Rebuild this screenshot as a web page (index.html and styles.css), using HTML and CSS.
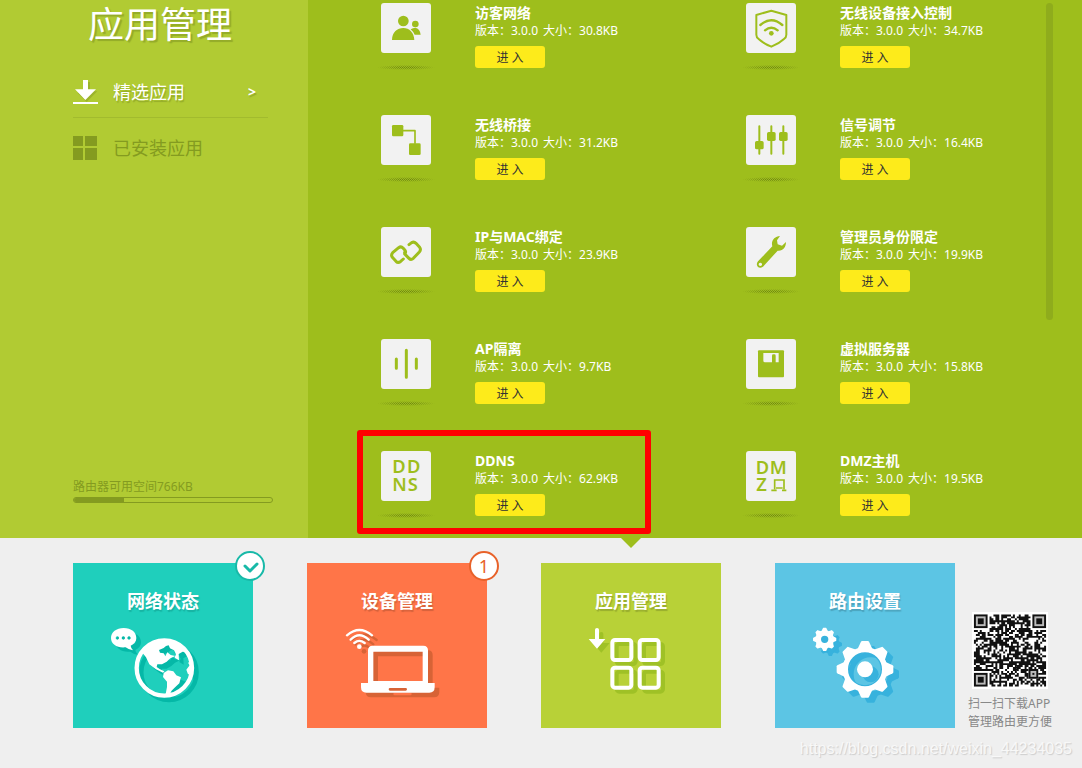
FILE: index.html
```html
<!DOCTYPE html>
<html lang="zh-CN">
<head>
<meta charset="utf-8">
<title>应用管理</title>
<meta name="viewport" content="width=device-width, initial-scale=1">
<link rel="stylesheet" href="styles.css">
</head>
<body>
<div class="top">
  <aside class="sidebar">
    <h1 class="title">应用管理</h1>
    <nav class="nav">
      <a class="nav-item active" href="#featured">
        <svg class="nav-icon" viewBox="219 240 75 75" aria-hidden="true"><path class="icon-shade" d="M255 246h15v28h22l-32 32-28-28h23z"/><path fill="#fff" d="M249 240h15v28h24l-32 32-31-32h24zM219 306h75v6h-75z"/></svg>
        <span>精选应用</span>
        <span class="nav-arrow">&gt;</span>
      </a>
      <a class="nav-item" href="#installed">
        <svg class="nav-icon" viewBox="219 408 75 75" aria-hidden="true"><path fill="currentColor" d="M219 408h30v30h-30zM255 408h36v30h-36zM219 444h30v36h-30zM255 444h36v36h-36z"/></svg>
        <span>已安装应用</span>
      </a>
    </nav>
    <div class="storage">
      <label for="space">路由器可用空间766KB</label>
      <progress id="space" class="space" max="100" value="25"></progress>
    </div>
  </aside>

  <main class="main">
    <ul class="apps">
      <li class="app">
        <div class="art"><svg class="app-icon" viewBox="33 9 150 150" aria-hidden="true"><g class="fill"><circle cx="100" cy="63" r="16"/><path d="M66 120C66 96 82 84 100 84S132 98 133 120z"/><circle cx="136" cy="72" r="10"/><path d="M122 88Q129 83 136 83 150 86 152 104H134Q130 95 122 88z"/></g></svg><span class="shade"></span></div>
        <div class="info"><h2>访客网络</h2><p><span>版本：3.0.0</span><span>大小：30.8KB</span></p><button type="button">进 入</button></div>
      </li>
      <li class="app">
        <div class="art"><svg class="app-icon" viewBox="33 9 150 150" aria-hidden="true"><g class="line" stroke-width="6"><path d="M109 32L154 45V104Q154 112 147 117 132 131 109 140 86 131 71 117 64 112 64 104V45z"/><path stroke-width="7" d="M76 75Q109 46 142 75M90 91Q109 75 128 91"/></g><circle class="fill" cx="109" cy="100" r="7"/></svg><span class="shade"></span></div>
        <div class="info"><h2>无线设备接入控制</h2><p><span>版本：3.0.0</span><span>大小：34.7KB</span></p><button type="button">进 入</button></div>
      </li>
      <li class="app">
        <div class="art"><svg class="app-icon" viewBox="33 345 150 150" aria-hidden="true"><g class="fill"><rect x="66" y="375" width="34" height="34" rx="4"/><rect x="117" y="430" width="35" height="35" rx="4"/></g><path class="line" stroke-width="5" d="M100 392H135V430"/></svg><span class="shade"></span></div>
        <div class="info"><h2>无线桥接</h2><p><span>版本：3.0.0</span><span>大小：31.2KB</span></p><button type="button">进 入</button></div>
      </li>
      <li class="app">
        <div class="art"><svg class="app-icon" viewBox="33 345 150 150" aria-hidden="true"><path class="line" stroke-width="6" d="M73 379V461M109 379V461M145 379V461"/><g class="fill"><rect x="60" y="423" width="26" height="25" rx="5"/><rect x="96" y="396" width="26" height="27" rx="5"/><rect x="132" y="396" width="26" height="27" rx="5"/></g></svg><span class="shade"></span></div>
        <div class="info"><h2>信号调节</h2><p><span>版本：3.0.0</span><span>大小：16.4KB</span></p><button type="button">进 入</button></div>
      </li>
      <li class="app">
        <div class="art"><svg class="app-icon" viewBox="33 21 150 150" aria-hidden="true"><path class="line" stroke-width="9" d="M100 117L91 125Q84 130 78 124L67 112Q62 105 68 98L86 83Q93 78 99 84L105 91Q109 97 104 102M117 74L125 68Q132 64 138 70L149 82Q154 89 148 96L130 115Q123 121 117 115L106 104Q103 100 104 97"/></svg><span class="shade"></span></div>
        <div class="info"><h2>IP与MAC绑定</h2><p><span>版本：3.0.0</span><span>大小：23.9KB</span></p><button type="button">进 入</button></div>
      </li>
      <li class="app">
        <div class="art"><svg class="app-icon" viewBox="33 21 150 150" aria-hidden="true"><path class="fill" fill-rule="evenodd" d="M135 48C119 49 107 62 112 79L69 124C62 132 66 143 76 143 82 143 85 140 88 136L128 92C143 94 153 82 153 66L141 77 128 73 126 61zM76 128a5 5 0 1 0 .1 0z"/></svg><span class="shade"></span></div>
        <div class="info"><h2>管理员身份限定</h2><p><span>版本：3.0.0</span><span>大小：19.9KB</span></p><button type="button">进 入</button></div>
      </li>
      <li class="app">
        <div class="art"><svg class="app-icon" viewBox="33 357 150 150" aria-hidden="true"><path class="line" stroke-width="9" d="M79 417V445M109 391V472M139 417V445"/></svg><span class="shade"></span></div>
        <div class="info"><h2>AP隔离</h2><p><span>版本：3.0.0</span><span>大小：9.7KB</span></p><button type="button">进 入</button></div>
      </li>
      <li class="app">
        <div class="art"><svg class="app-icon" viewBox="33 357 150 150" aria-hidden="true"><rect class="fill" x="69" y="391" width="78" height="81" rx="3"/><path fill="#f2f2f2" d="M85 399H131V427H122V407Q122 403 118 403H115Q111 403 111 407V427H90Q85 427 85 422z"/></svg><span class="shade"></span></div>
        <div class="info"><h2>虚拟服务器</h2><p><span>版本：3.0.0</span><span>大小：15.8KB</span></p><button type="button">进 入</button></div>
      </li>
      <li class="app">
        <div class="art"><svg class="app-icon" viewBox="93 93 150 150" aria-hidden="true"><text class="letters" x="127 171" y="160">DD</text><text class="letters" x="127 173" y="212">NS</text></svg><span class="shade"></span></div>
        <div class="info"><h2>DDNS</h2><p><span>版本：3.0.0</span><span>大小：62.9KB</span></p><button type="button">进 入</button></div>
        <span class="highlight"></span>
      </li>
      <li class="app">
        <div class="art"><svg class="app-icon" viewBox="33 63 150 150" aria-hidden="true"><text class="letters" x="62 104" y="131">DM</text><text class="letters" x="64" y="184">Z</text><path fill="none" stroke="#9ebe1c" stroke-width="5" d="M119 178V150H147V178M109 181H125M141 181H154M123 174H143"/></svg><span class="shade"></span></div>
        <div class="info"><h2>DMZ主机</h2><p><span>版本：3.0.0</span><span>大小：19.5KB</span></p><button type="button">进 入</button></div>
      </li>
    </ul>
    <div class="scrollbar"></div>
  </main>
</div>

<footer class="dock">
  <nav class="tiles">
    <a class="tile teal" href="#status">
      <span class="tile-name">网络状态</span>
      <svg class="tile-icon" viewBox="144 237 330 240" aria-hidden="true">
        <defs>
          <g id="globe">
            <circle cx="313" cy="369" r="83" fill="none" stroke="currentColor" stroke-width="13"/>
            <path fill="currentColor" d="M246 322Q262 296 300 287L345 290 370 306 382 322 368 320 356 327 357 346 344 338 348 328 342 316 330 310 326 301 318 303 311 309 297 315 300 323 311 325 316 334 322 322 332 330 346 333 331 340 320 350 306 358 292 358 290 366 300 373 313 379 309 383 288 373 268 358 258 337z"/>
            <path fill="currentColor" d="M311 384L324 376 340 379 349 391 363 397 358 415 343 429 334 438 327 453 316 452 321 426 321 410 309 396z"/>
            <path fill="currentColor" d="M397 348L384 353 389 361 379 374 384 388 397 388z"/>
            <path fill="currentColor" fill-rule="evenodd" d="M191 249C214 249 229 262 229 279C229 290 223 297 212 302Q213 310 219 316 207 315 197 307C172 310 153 298 153 279C153 262 169 249 191 249zM172 274a5 5 0 1 0 .1 0zM190 274a5 5 0 1 0 .1 0zM207 274a5 5 0 1 0 .1 0z"/>
          </g>
        </defs>
        <use href="#globe" x="14" y="13" color="#05b8a7"/>
        <use href="#globe" color="#fff"/>
      </svg>
      <span class="badge"><svg viewBox="2 2 26 26" width="26" height="26" aria-hidden="true"><path fill="none" stroke="#18b9a8" stroke-width="3" stroke-linecap="round" stroke-linejoin="round" d="M10 15l5 5 7-7"/></svg></span>
    </a>
    <a class="tile orange" href="#devices">
      <span class="tile-name">设备管理</span>
      <svg class="tile-icon" viewBox="126 237 330 240" aria-hidden="true">
        <defs>
          <g id="laptop">
            <path fill="currentColor" fill-rule="evenodd" d="M218 302H370Q384 302 384 316V414H404V427Q404 443 388 443H199Q183 443 183 427V414H204V316Q204 302 218 302zM220 320V408H368V320zM270 429Q266 429 266 433T270 437H317Q321 437 321 433T317 429z"/>
            <path fill="none" stroke="currentColor" stroke-width="7" stroke-linecap="round" d="M141 271Q178 239 216 271M152 284Q178 258 206 284M163 294Q178 281 194 294"/>
            <circle cx="178" cy="305" r="7" fill="currentColor"/>
          </g>
        </defs>
        <use href="#laptop" x="14" y="14" color="#d76336"/>
        <use href="#laptop" color="#fff"/>
      </svg>
      <span class="badge">1</span>
    </a>
    <a class="tile green current" href="#apps">
      <span class="tile-name">应用管理</span>
      <svg class="tile-icon" viewBox="123 282 330 240" aria-hidden="true">
        <defs>
          <g id="grid">
            <g fill="none" stroke="currentColor" stroke-width="12"><rect x="232" y="330" width="57" height="60" rx="8"/><rect x="314" y="330" width="57" height="60" rx="8"/><rect x="232" y="413" width="57" height="60" rx="8"/><rect x="314" y="413" width="57" height="60" rx="8"/></g>
            <path fill="currentColor" d="M180 299Q180 294 186 294T192 299V327H211L186 356 161 327H180z"/>
          </g>
        </defs>
        <use href="#grid" x="13" y="12" color="#9fc126"/>
        <use href="#grid" color="#fff"/>
      </svg>
    </a>
    <a class="tile blue" href="#settings">
      <span class="tile-name">路由设置</span>
      <svg class="tile-icon" viewBox="120 207 330 240" aria-hidden="true">
        <defs>
          <path id="tooth" d="M-22 -62L-12 -83Q-11 -85 -9 -85H9Q11 -85 12 -83L22 -62V-55H-22z"/>
          <g id="gear-rim">
            <circle r="59" fill="none" stroke="currentColor" stroke-width="16"/>
            <g fill="currentColor"><use href="#tooth"/><use href="#tooth" transform="rotate(45)"/><use href="#tooth" transform="rotate(90)"/><use href="#tooth" transform="rotate(135)"/><use href="#tooth" transform="rotate(180)"/><use href="#tooth" transform="rotate(225)"/><use href="#tooth" transform="rotate(270)"/><use href="#tooth" transform="rotate(315)"/></g>
          </g>
          <g id="gears">
            <use href="#gear-rim" transform="translate(285 343)"/>
            <circle cx="285" cy="343" r="24" fill="currentColor"/>
            <use href="#gear-rim" transform="translate(164 253) scale(.41)"/>
            <circle cx="164" cy="253" r="17" fill="none" stroke="currentColor" stroke-width="12"/>
          </g>
        </defs>
        <use href="#gears" x="17" y="15" color="#37b2dd"/>
        <circle cx="285" cy="343" r="50" fill="none" stroke="#37b2dd" stroke-width="5"/>
        <circle cx="164" cy="253" r="11" fill="#37b2dd"/>
        <use href="#gears" color="#fff"/>
      </svg>
    </a>
  </nav>
  <div class="download">
    <svg id="qr" class="qr" viewBox="-1 -1 39 39" role="img" aria-label="APP"></svg>
    <p>扫一扫下载APP<br>管理路由更方便</p>
  </div>
  <span class="watermark">https://blog.csdn.net/weixin_44234035</span>
</footer>
<script src="script.js"></script>
</body>
</html>
```

FILE: styles.css
```css
* { box-sizing: border-box; }

body {
  margin: 0;
  min-height: 100vh;
  display: flex;
  flex-direction: column;
  background: #efefef;
  font: 12px/18px "Noto Sans", "Noto Sans CJK SC", sans-serif;
  color: #fff;
}

h1, h2, p, ul { margin: 0; padding: 0; }
a { color: inherit; text-decoration: none; }
svg { display: block; }

.top {
  flex: 1;
  display: flex;
  background: #9ebe1c;
}

.sidebar {
  flex: none;
  width: 308px;
  padding: 0 35px 35px 73px;
  display: flex;
  flex-direction: column;
  background: #b1cb33;
}

.title {
  padding-left: 15px;
  font-size: 36px;
  line-height: 50px;
  font-weight: 400;
  text-shadow: 2px 2px 1px #94ab29;
}

.nav { padding: 12px 5px 0 0; }

.nav-item {
  display: flex;
  align-items: center;
  gap: 15px;
  height: 56px;
  padding-top: 4px;
  font-size: 18px;
  line-height: 24px;
  color: #849b20;
}

.nav-item.active {
  padding-top: 5px;
  color: #fff;
  border-bottom: 1px solid #a2bb2e;
  text-shadow: 1px 2px 1px #94ab29;
}

.nav-icon { width: 25px; height: 25px; flex: none; }
.icon-shade { fill: #9cb42c; }

.nav-arrow {
  margin-left: auto;
  padding-right: 12px;
  font-size: 14px;
  font-weight: 700;
}

.storage {
  margin-top: auto;
  color: #849b20;
}

.storage label { display: block; }

.space {
  display: block;
  appearance: none;
  width: 100%;
  height: 6px;
  margin-top: 1px;
  border: 1px solid #849b20;
  border-radius: 3px;
  background: none;
  overflow: hidden;
}

.space::-webkit-progress-bar { background: none; }
.space::-webkit-progress-value { background: #849b20; }

.main {
  flex: 1;
  display: flex;
  align-items: flex-start;
  padding: 3px 29px 19px 73px;
}

.apps {
  flex: 1;
  display: grid;
  grid-template-columns: 1fr 1fr;
  gap: 44px 65px;
  list-style: none;
}

.app {
  position: relative;
  display: flex;
  gap: 44px;
  height: 68px;
}

.art { width: 50px; }

.app-icon {
  width: 50px;
  height: 50px;
  border-radius: 3px;
  background: #f2f2f2;
}

.fill { fill: #9ebe1c; }

.line {
  fill: none;
  stroke: #9ebe1c;
  stroke-linecap: round;
  stroke-linejoin: round;
}

.letters {
  fill: #9ebe1c;
  font: 600 55px "Noto Sans", sans-serif;
}

.shade {
  display: block;
  height: 5px;
  margin: 12px -4px 0;
  background: repeating-conic-gradient(#6f8713 0 25%, transparent 0 50%) 0 0 / 2px 2px;
  mask-image: radial-gradient(closest-side, #000 20%, transparent);
}

.info { padding-top: 1px; white-space: nowrap; }

.info h2 {
  font-size: 14px;
  line-height: 18px;
  font-weight: 700;
}

.info p {
  display: flex;
  gap: 5px;
}

.info button {
  display: block;
  width: 70px;
  height: 22px;
  margin-top: 6px;
  padding: 2px 0 0;
  border: 0;
  border-radius: 3px;
  background: #fdeb1b;
  color: #333;
  font: inherit;
}

.highlight {
  position: absolute;
  inset: -21px auto auto -24px;
  width: 294px;
  height: 104px;
  border: 6px solid #f00;
  border-radius: 3px;
}

.scrollbar {
  width: 7px;
  height: 317px;
  border-radius: 4px;
  background: #8fac1c;
}

.dock {
  position: relative;
  display: flex;
  align-items: flex-start;
  gap: 13px;
  padding: 25px 30px 37px 73px;
}

.tiles {
  flex: 1;
  display: grid;
  grid-template-columns: repeat(4, 1fr);
  gap: 54px;
}

.tile {
  position: relative;
  display: flex;
  flex-direction: column;
  align-items: center;
  gap: 11px;
  padding: 26px 0 24px;
}

.teal { background: #1fcfbc; --shade: #17b3a2; --edge: #18b9a8; }
.orange { background: #ff7548; --shade: #d5623c; --edge: #e8622a; }
.green { background: #b8d137; --shade: #98ad2e; }
.blue { background: #5cc5e4; --shade: #4ba3bd; }

.tile-name {
  font-size: 18px;
  line-height: 24px;
  font-weight: 700;
  text-shadow: 1px 2px 1px var(--shade);
}

.tile-icon { width: 110px; height: 80px; }

.badge {
  position: absolute;
  top: -12px;
  right: -12px;
  display: grid;
  place-items: center;
  width: 30px;
  height: 30px;
  border: 2px solid var(--edge);
  border-radius: 50%;
  background: #fff;
  color: #e8622a;
  font-size: 18px;
  font-weight: 400;
  line-height: 24px;
}

.current::before {
  content: "";
  position: absolute;
  top: -25px;
  left: calc(50% - 10px);
  border: 10px solid transparent;
  border-top-color: #9ebe1c;
  border-bottom: 0;
}

.download {
  display: flex;
  flex-direction: column;
  align-items: center;
  gap: 6px;
  padding-top: 49px;
  color: #888;
  white-space: nowrap;
}

.qr { width: 76px; height: 77px; background: #fff; }

.watermark {
  position: absolute;
  right: 10px;
  bottom: 9px;
  font: 16px/20px "Liberation Sans", sans-serif;
  color: #f8f8f8;
  text-shadow: 1px 1px 1px #ccc;
}
```

FILE: script.js
```javascript
// Draws the download code: random modules plus finder and alignment marks.
(function () {
  var size = 37;
  var seed = 20977;
  function next() {
    seed = (seed * 1103515245 + 12345) % 2147483648;
    return seed / 2147483648;
  }
  function reserved(x, y) {
    return (x < 8 && y < 8) || (x > size - 9 && y < 8) || (x < 8 && y > size - 9) ||
      (x > 27 && x < 33 && y > 27 && y < 33);
  }
  var d = "";
  for (var y = 0; y < size; y++) {
    for (var x = 0; x < size; x++) {
      if (next() < 0.6 && !reserved(x, y)) d += "M" + x + " " + y + "h1v1h-1z";
    }
  }
  function mark(x, y, n) {
    return '<rect x="' + (x + 0.5) + '" y="' + (y + 0.5) + '" width="' + (n - 1) + '" height="' + (n - 1) +
      '" fill="#bbb" stroke="#111" stroke-width="1"/>' +
      '<rect x="' + (x + 2) + '" y="' + (y + 2) + '" width="' + (n - 4) + '" height="' + (n - 4) + '" fill="#111"/>';
  }
  document.getElementById("qr").innerHTML =
    '<path fill="#111" d="' + d + '"/>' + mark(0, 0, 7) + mark(30, 0, 7) + mark(0, 30, 7) + mark(28, 28, 5);
})();
```
